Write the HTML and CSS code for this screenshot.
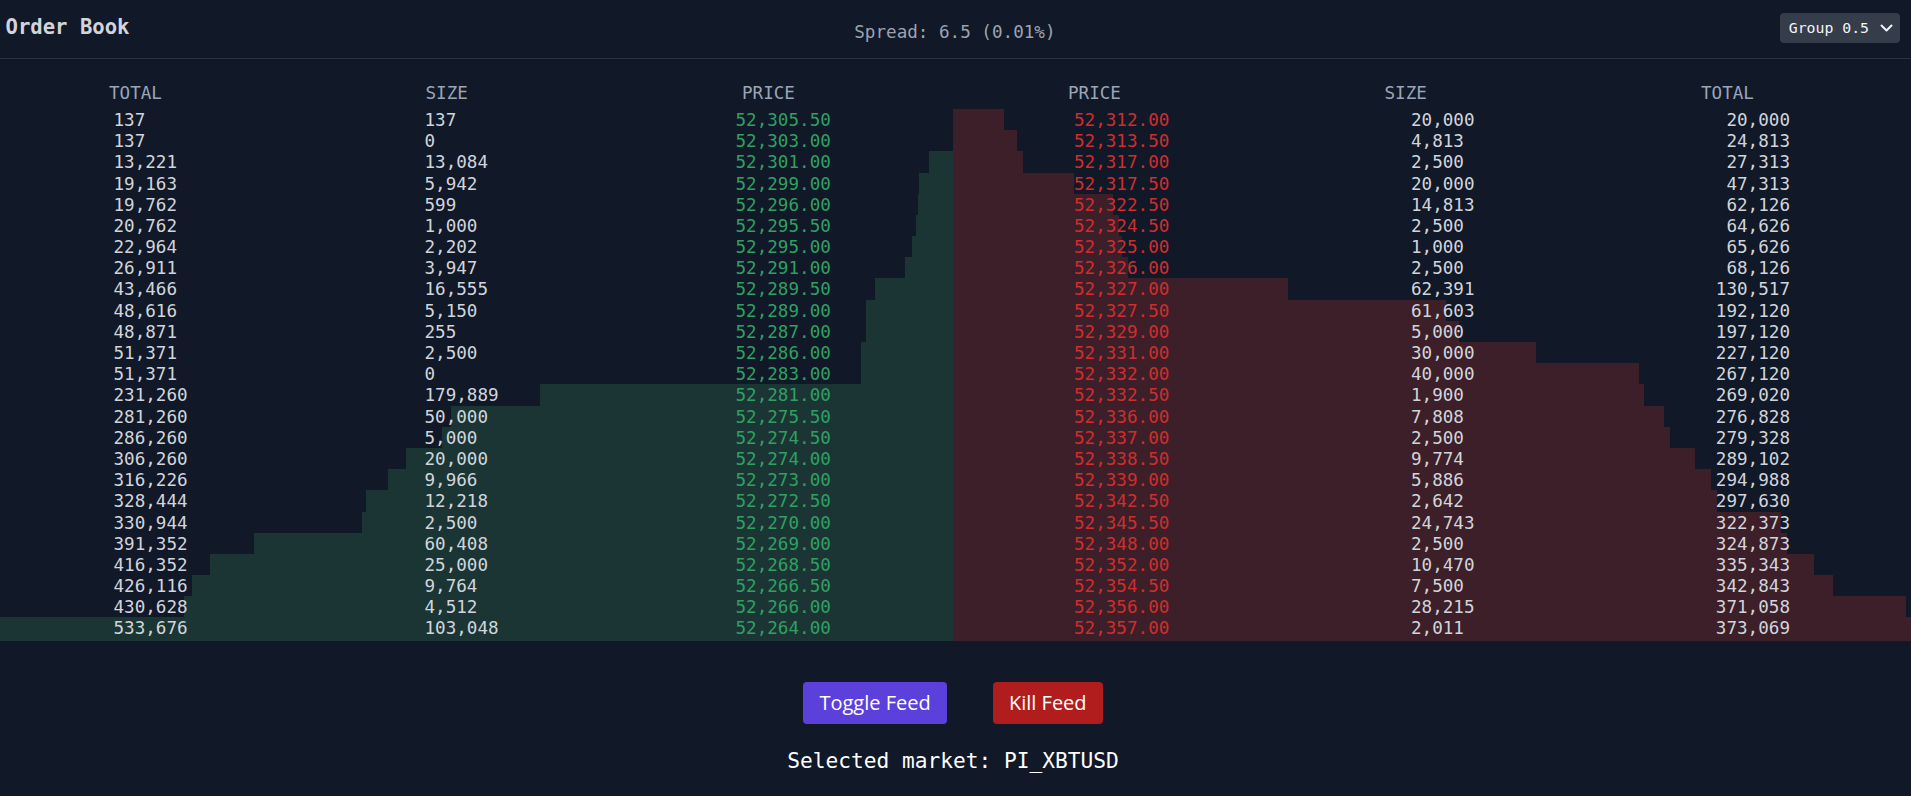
FILE: index.html
```html
<!DOCTYPE html>
<html lang="en">
<head>
<meta charset="utf-8">
<title>Order Book</title>
<link rel="stylesheet" href="styles.css">
</head>
<body>
<div class="app">
  <header class="topbar">
    <h1 class="title">Order Book</h1>
    <div class="spread">Spread: 6.5 (0.01%)</div>
    <button class="group" type="button">
      <span>Group 0.5</span>
      <svg class="chev" width="13" height="8" viewBox="0 0 13 8" aria-hidden="true"><path d="M1.5 1.5 L6.5 6.5 L11.5 1.5" fill="none" stroke="#f3f4f6" stroke-width="2" stroke-linecap="round" stroke-linejoin="round"/></svg>
    </button>
  </header>

  <main class="book">
    <section class="side bids">
      <div class="head"><span>TOTAL</span><span>SIZE</span><span>PRICE</span></div>
      <div class="row" style="--d:0.026%"><span>137</span><span>137</span><span class="price">52,305.50</span></div>
      <div class="row" style="--d:0.026%"><span>137</span><span>0</span><span class="price">52,303.00</span></div>
      <div class="row" style="--d:2.477%"><span>13,221</span><span>13,084</span><span class="price">52,301.00</span></div>
      <div class="row" style="--d:3.591%"><span>19,163</span><span>5,942</span><span class="price">52,299.00</span></div>
      <div class="row" style="--d:3.703%"><span>19,762</span><span>599</span><span class="price">52,296.00</span></div>
      <div class="row" style="--d:3.890%"><span>20,762</span><span>1,000</span><span class="price">52,295.50</span></div>
      <div class="row" style="--d:4.303%"><span>22,964</span><span>2,202</span><span class="price">52,295.00</span></div>
      <div class="row" style="--d:5.043%"><span>26,911</span><span>3,947</span><span class="price">52,291.00</span></div>
      <div class="row" style="--d:8.145%"><span>43,466</span><span>16,555</span><span class="price">52,289.50</span></div>
      <div class="row" style="--d:9.110%"><span>48,616</span><span>5,150</span><span class="price">52,289.00</span></div>
      <div class="row" style="--d:9.157%"><span>48,871</span><span>255</span><span class="price">52,287.00</span></div>
      <div class="row" style="--d:9.626%"><span>51,371</span><span>2,500</span><span class="price">52,286.00</span></div>
      <div class="row" style="--d:9.626%"><span>51,371</span><span>0</span><span class="price">52,283.00</span></div>
      <div class="row" style="--d:43.333%"><span>231,260</span><span>179,889</span><span class="price">52,281.00</span></div>
      <div class="row" style="--d:52.702%"><span>281,260</span><span>50,000</span><span class="price">52,275.50</span></div>
      <div class="row" style="--d:53.639%"><span>286,260</span><span>5,000</span><span class="price">52,274.50</span></div>
      <div class="row" style="--d:57.387%"><span>306,260</span><span>20,000</span><span class="price">52,274.00</span></div>
      <div class="row" style="--d:59.254%"><span>316,226</span><span>9,966</span><span class="price">52,273.00</span></div>
      <div class="row" style="--d:61.544%"><span>328,444</span><span>12,218</span><span class="price">52,272.50</span></div>
      <div class="row" style="--d:62.012%"><span>330,944</span><span>2,500</span><span class="price">52,270.00</span></div>
      <div class="row" style="--d:73.331%"><span>391,352</span><span>60,408</span><span class="price">52,269.00</span></div>
      <div class="row" style="--d:78.016%"><span>416,352</span><span>25,000</span><span class="price">52,268.50</span></div>
      <div class="row" style="--d:79.846%"><span>426,116</span><span>9,764</span><span class="price">52,266.50</span></div>
      <div class="row" style="--d:80.691%"><span>430,628</span><span>4,512</span><span class="price">52,266.00</span></div>
      <div class="row" style="--d:100%"><span>533,676</span><span>103,048</span><span class="price">52,264.00</span></div>
    </section>

    <section class="side asks">
      <div class="head"><span>PRICE</span><span>SIZE</span><span>TOTAL</span></div>
      <div class="row" style="--d:5.361%"><span class="price">52,312.00</span><span>20,000</span><span>20,000</span></div>
      <div class="row" style="--d:6.651%"><span class="price">52,313.50</span><span>4,813</span><span>24,813</span></div>
      <div class="row" style="--d:7.321%"><span class="price">52,317.00</span><span>2,500</span><span>27,313</span></div>
      <div class="row" style="--d:12.682%"><span class="price">52,317.50</span><span>20,000</span><span>47,313</span></div>
      <div class="row" style="--d:16.653%"><span class="price">52,322.50</span><span>14,813</span><span>62,126</span></div>
      <div class="row" style="--d:17.323%"><span class="price">52,324.50</span><span>2,500</span><span>64,626</span></div>
      <div class="row" style="--d:17.591%"><span class="price">52,325.00</span><span>1,000</span><span>65,626</span></div>
      <div class="row" style="--d:18.261%"><span class="price">52,326.00</span><span>2,500</span><span>68,126</span></div>
      <div class="row" style="--d:34.985%"><span class="price">52,327.00</span><span>62,391</span><span>130,517</span></div>
      <div class="row" style="--d:51.497%"><span class="price">52,327.50</span><span>61,603</span><span>192,120</span></div>
      <div class="row" style="--d:52.837%"><span class="price">52,329.00</span><span>5,000</span><span>197,120</span></div>
      <div class="row" style="--d:60.879%"><span class="price">52,331.00</span><span>30,000</span><span>227,120</span></div>
      <div class="row" style="--d:71.601%"><span class="price">52,332.00</span><span>40,000</span><span>267,120</span></div>
      <div class="row" style="--d:72.110%"><span class="price">52,332.50</span><span>1,900</span><span>269,020</span></div>
      <div class="row" style="--d:74.203%"><span class="price">52,336.00</span><span>7,808</span><span>276,828</span></div>
      <div class="row" style="--d:74.873%"><span class="price">52,337.00</span><span>2,500</span><span>279,328</span></div>
      <div class="row" style="--d:77.493%"><span class="price">52,338.50</span><span>9,774</span><span>289,102</span></div>
      <div class="row" style="--d:79.071%"><span class="price">52,339.00</span><span>5,886</span><span>294,988</span></div>
      <div class="row" style="--d:79.779%"><span class="price">52,342.50</span><span>2,642</span><span>297,630</span></div>
      <div class="row" style="--d:86.411%"><span class="price">52,345.50</span><span>24,743</span><span>322,373</span></div>
      <div class="row" style="--d:87.081%"><span class="price">52,348.00</span><span>2,500</span><span>324,873</span></div>
      <div class="row" style="--d:89.888%"><span class="price">52,352.00</span><span>10,470</span><span>335,343</span></div>
      <div class="row" style="--d:91.898%"><span class="price">52,354.50</span><span>7,500</span><span>342,843</span></div>
      <div class="row" style="--d:99.461%"><span class="price">52,356.00</span><span>28,215</span><span>371,058</span></div>
      <div class="row" style="--d:100%"><span class="price">52,357.00</span><span>2,011</span><span>373,069</span></div>
    </section>
  </main>

  <div class="controls">
    <button class="btn toggle" type="button">Toggle Feed</button>
    <button class="btn kill" type="button">Kill Feed</button>
  </div>
  <p class="market">Selected market: PI_XBTUSD</p>
</div>
</body>
</html>
```

FILE: styles.css
```css
* { box-sizing: border-box; }

html, body {
  margin: 0;
  background: #111827;
}

body {
  font-family: "DejaVu Sans Mono", "Liberation Mono", monospace;
  color: #d1d5db;
  min-height: 796px;
}

.topbar {
  display: flex;
  justify-content: space-between;
  align-items: center;
  height: 59px;
  padding: 0 11px 0 5.5px;
  border-bottom: 1px solid #2b313d;
}

.title {
  margin: 0 0 3px;
  font-size: 20.6px;
  line-height: 25px;
  font-weight: bold;
  color: #d1d5db;
}

.spread {
  margin-top: 6px;
  font-size: 17.6px;
  line-height: 21px;
  color: #9ca3af;
}

.group {
  display: flex;
  align-items: center;
  gap: 11px;
  height: 30px;
  margin-bottom: 1.5px;
  padding: 0 7px 0 8.5px;
  border: 0;
  border-radius: 4px;
  background: #353c4a;
  color: #f3f4f6;
  font-family: "DejaVu Sans Mono", monospace;
  font-size: 14.8px;
  line-height: 18px;
}

.chev { display: block; }

.book {
  display: grid;
  grid-template-columns: 953px 1fr;
  padding-top: 23.7px;
  font-size: 17.6px;
}

.head {
  display: grid;
  grid-template-columns: 316.5px 316.5px auto;
  height: 21.2px;
  line-height: 21.2px;
  margin-bottom: 5.1px;
  color: #9aa5b8;
}

.bids .head { padding-left: 109px; }
.asks .head { padding-left: 115px; }

.row {
  display: grid;
  height: 21.2px;
  padding-top: 1px;
  line-height: 20.2px;
  color: #d1d5db;
  white-space: nowrap;
}

.row:last-child { height: 23.5px; }

.bids .row {
  grid-template-columns: 311px 311px auto;
  padding-left: 113.5px;
  background: linear-gradient(to left, #1b3535 var(--d), transparent var(--d));
}

.asks .row {
  grid-template-columns: 337px 242px 137px;
  padding-left: 121px;
  background: linear-gradient(to right, #3c1f28 var(--d), transparent var(--d));
}

.asks .row span:last-child { text-align: right; }

.bids .price { color: #2fa062; }
.asks .price { color: #cf2e2e; }

.controls {
  display: flex;
  justify-content: center;
  gap: 46.3px;
  margin-top: 41.3px;
  padding-right: 5px;
}

.btn {
  border: 0;
  border-radius: 4px;
  padding: 6.65px 16px;
  font-family: "Open Sans", "Noto Sans", sans-serif;
  font-size: 20px;
  line-height: 28px;
  color: #ffffff;
}

.toggle { background: #5c40dc; }
.kill { background: #b11d1c; }

.market {
  margin: 24.2px 0 0;
  padding-right: 5px;
  text-align: center;
  font-size: 21.2px;
  line-height: 25px;
  color: #ffffff;
}
```
